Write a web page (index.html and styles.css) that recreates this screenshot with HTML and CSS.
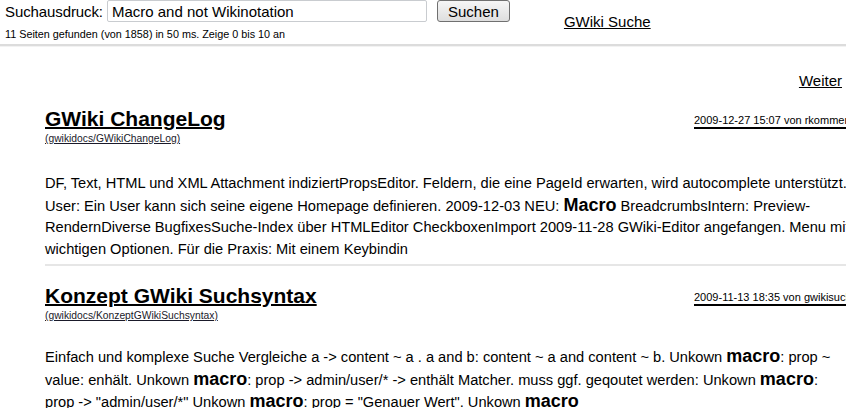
FILE: index.html
```html
<!DOCTYPE html>
<html lang="de">
<head>
<meta charset="utf-8">
<title>GWiki Suche</title>
<link rel="stylesheet" href="styles.css">
</head>
<body>
<div class="page">
  <header class="search-head">
    <div class="search-left">
      <form class="search-form">
        <label class="search-label" for="q">Suchausdruck:</label>
        <input class="search-input" id="q" type="text" value="Macro and not Wikinotation">
        <button class="search-btn" type="button">Suchen</button>
      </form>
      <div class="search-stats">11 Seiten gefunden (von 1858) in 50 ms. Zeige 0 bis 10 an</div>
    </div>
    <a class="head-link" href="#">GWiki Suche</a>
  </header>

  <div class="results">
    <div class="pager"><a href="#" class="pager-link">Weiter</a></div>

    <div class="result">
      <div class="result-head">
        <div class="result-titlebox">
          <a class="result-title" href="#">GWiki ChangeLog</a>
          <a class="result-path" href="#">(gwikidocs/GWikiChangeLog)</a>
        </div>
        <div class="result-meta">2009-12-27 15:07 von rkommer</div>
      </div>
      <p class="result-text">DF, Text, HTML und XML Attachment indiziertPropsEditor. Feldern, die eine PageId erwarten, wird autocomplete unterstützt. User: Ein User kann sich seine eigene Homepage definieren. 2009-12-03 NEU: <b class="hit">Macro</b> BreadcrumbsIntern: Preview-RendernDiverse BugfixesSuche-Index über HTMLEditor CheckboxenImport 2009-11-28 GWiki-Editor angefangen. Menu mit wichtigen Optionen. Für die Praxis: Mit einem Keybindin</p>
    </div>

    <div class="result">
      <div class="result-head">
        <div class="result-titlebox">
          <a class="result-title" href="#">Konzept GWiki Suchsyntax</a>
          <a class="result-path" href="#">(gwikidocs/KonzeptGWikiSuchsyntax)</a>
        </div>
        <div class="result-meta">2009-11-13 18:35 von gwikisuche</div>
      </div>
      <p class="result-text">Einfach und komplexe Suche Vergleiche a -&gt; content ~ a . a and b: content ~ a and content ~ b. Unkown <b class="hit">macro</b>: prop ~ value: enhält. Unkown <b class="hit">macro</b>: prop -&gt; admin/user/* -&gt; enthält Matcher. muss ggf. geqoutet werden: Unkown <b class="hit">macro</b>: prop -&gt; "admin/user/*" Unkown <b class="hit">macro</b>: prop = "Genauer Wert". Unkown <b class="hit">macro</b></p>
    </div>
  </div>
</div>
</body>
</html>
```

FILE: styles.css
```css
html, body {
  margin: 0;
  padding: 0;
  background: #fff;
  overflow: hidden;
}
body {
  font-family: "Liberation Sans", Arial, sans-serif;
  color: #000;
}
.page {
  width: 846px;
  overflow: hidden;
}
.search-head {
  display: flex;
  align-items: flex-start;
  padding: 0 0 5px 5px;
  border-bottom: 2px solid #dcdcdc;
  box-shadow: 0 1px 0 #f2f2f2;
  height: 39px;
}
.search-form {
  display: flex;
  align-items: center;
  margin: 0;
}
.search-label {
  font-size: 15px;
  margin-right: 4px;
  letter-spacing: -0.1px;
}
.search-input {
  width: 320px;
  height: 22px;
  box-sizing: border-box;
  border: 1px solid #c9ccd0;
  border-radius: 2px;
  padding: 0 4px;
  font-family: "Liberation Sans", Arial, sans-serif;
  font-size: 15px;
  color: #000;
}
.search-btn {
  margin-left: 10px;
  width: 73px;
  height: 22px;
  box-sizing: border-box;
  border: 1px solid #707070;
  border-radius: 3px;
  background: linear-gradient(#f6f6f6, #dedede);
  font-family: "Liberation Sans", Arial, sans-serif;
  font-size: 15px;
  color: #000;
  padding: 0;
}
.search-stats {
  font-size: 10.8px;
  margin-top: 6px;
}
.head-link {
  margin: 13px 0 0 54px;
  font-size: 15px;
  color: #000;
}
.results {
  width: 880px;
  padding-left: 45px;
}
.pager {
  width: 797px;
  text-align: right;
  margin-top: 26px;
  font-size: 15px;
}
.pager-link {
  color: #000;
}
.result {
  border-bottom: 2px solid #e6e6e6;
}
.result + .result {
  border-bottom: none;
}
.result-head {
  display: flex;
  align-items: flex-start;
  padding-top: 18px;
}
.result-titlebox {
  display: flex;
  flex-direction: column;
  width: 649px;
}
.result-title {
  font-size: 21px;
  font-weight: bold;
  color: #000;
  text-decoration-thickness: 2px;
  align-self: flex-start;
}
.result-path {
  font-size: 10.3px;
  color: #1a1a2a;
  margin-top: 2px;
  align-self: flex-start;
}
.result-meta {
  font-size: 11px;
  padding-top: 7px;
  padding-bottom: 1px;
  border-bottom: 2px solid #000;
  flex: 1;
  white-space: nowrap;
}
.result-text {
  width: 805px;
  font-size: 14.65px;
  line-height: 21.5px;
  margin: 29px 0 4px;
}
.result + .result .result-text {
  margin-top: 25px;
}
.hit {
  font-size: 18px;
}
```
